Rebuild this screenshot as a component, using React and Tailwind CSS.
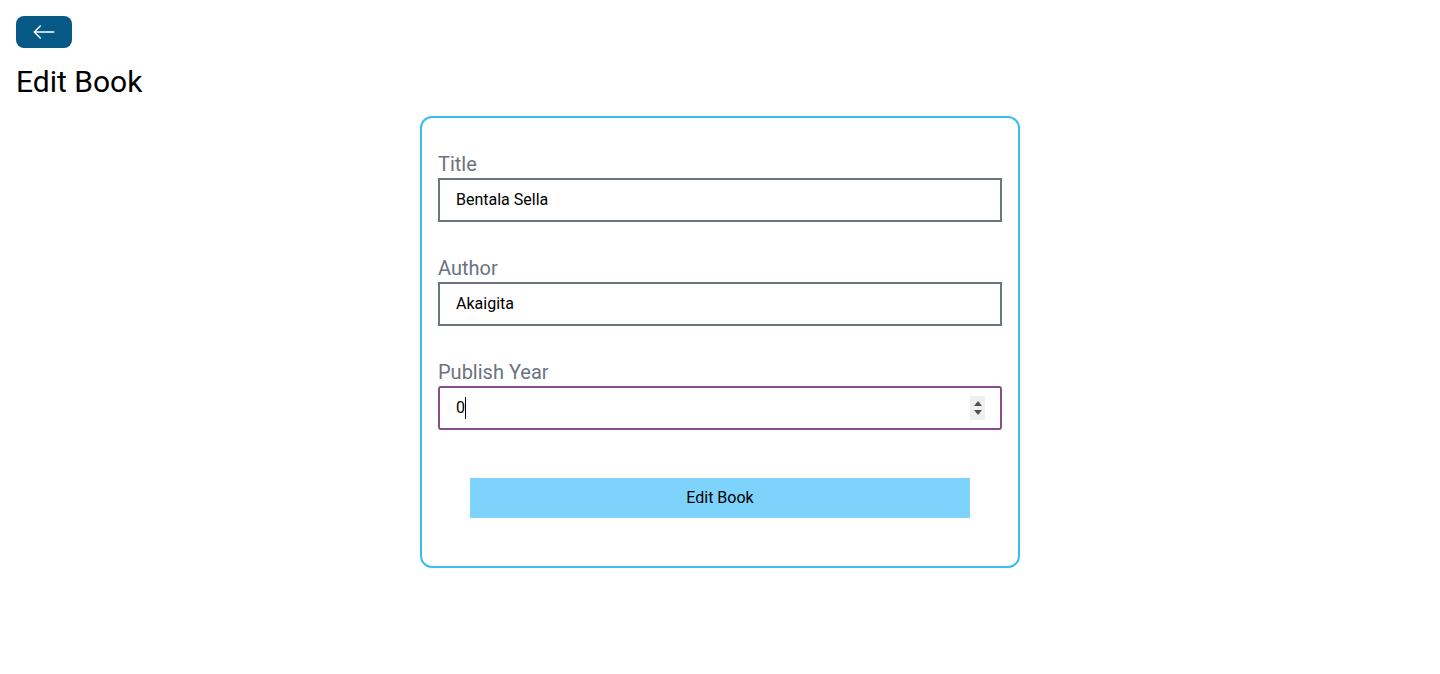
import { BsArrowLeft } from 'react-icons/bs';

const font = { fontFamily: 'Roboto, "Noto Sans", sans-serif' };

function Field({ label, value, focused }) {
    return (
        <div className="my-4">
            <label className="block text-xl text-[#6b7280]">{label}</label>
            <div className="relative">
                <input
                    type="text"
                    readOnly
                    value={value}
                    className={[
                        'w-full border-2 px-4 py-2 text-base text-black outline-none',
                        focused ? 'rounded-[3px] border-[#8a4d8c]' : 'border-[#6b7280]',
                    ].join(' ')}
                />
                {focused && (
                    <>
                        <span className="pointer-events-none absolute left-[27px] top-[11px] h-[22px] w-px bg-black" />
                        <span className="pointer-events-none absolute right-[17px] top-[10px] flex h-[24px] w-[15px] flex-col items-center justify-center gap-[4px] bg-[#efefef]">
                            <span className="h-0 w-0 border-x-[4px] border-b-[5px] border-x-transparent border-b-[#505050]" />
                            <span className="h-0 w-0 border-x-[4px] border-t-[5px] border-x-transparent border-t-[#505050]" />
                        </span>
                    </>
                )}
            </div>
        </div>
    );
}

export default function App() {
    return (
        <div className="min-h-screen bg-white p-4" style={font}>
            <div className="flex">
                <button className="w-fit rounded-lg bg-[#075985] px-4 py-1 text-white">
                    <BsArrowLeft className="text-2xl" />
                </button>
            </div>

            <h1 className="my-4 text-3xl text-black">Edit Book</h1>

            <div className="mx-auto flex w-[600px] flex-col rounded-xl border-2 border-[#38bdf8] p-4">
                <Field label="Title" value="Bentala Sella" />
                <Field label="Author" value="Akaigita" />
                <Field label="Publish Year" value="0" focused />

                <button className="m-8 bg-[#7dd3fc] p-2 text-base text-black">
                    Edit Book
                </button>
            </div>
        </div>
    );
}
